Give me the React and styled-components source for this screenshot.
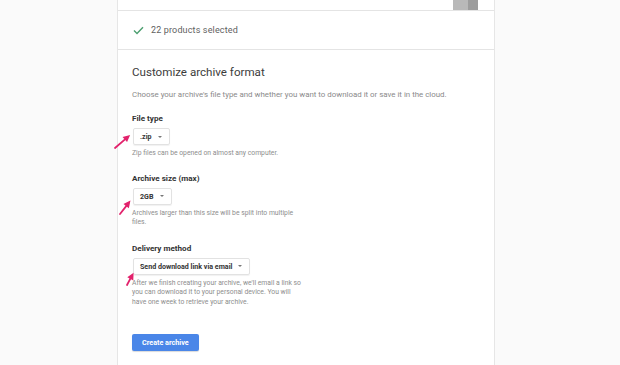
import React from 'react'
import styled, { createGlobalStyle } from 'styled-components'

const GlobalStyle = createGlobalStyle`
  html, body {
    margin: 0;
    padding: 0;
    background: #fafafa;
    font-family: Roboto, 'Liberation Sans', Arial, sans-serif;
  }
`

const Page = styled.div`
  width: 620px;
  height: 365px;
  overflow: hidden;
  padding-left: 117px;
  box-sizing: border-box;
`

const Card = styled.div`
  width: 378px;
  background: #fff;
  border-left: 1px solid #e6e6e6;
  border-right: 1px solid #e6e6e6;
  box-sizing: border-box;
`

const TopStrip = styled.div`
  height: 10px;
  border-bottom: 1px solid #e4e4e4;
  display: flex;
  justify-content: flex-end;
  padding-right: 16px;
`

const Thumb = styled.div`
  width: 25px;
  height: 10px;
  background: linear-gradient(to right, #b9b9b9 0 60%, #9d9d9d 60% 100%);
`

const SelectedRow = styled.div`
  height: 38px;
  display: flex;
  align-items: center;
  gap: 7px;
  padding-left: 15px;
  border-bottom: 1px solid #e4e4e4;
  font-size: 9px;
  color: #5f5f5f;
  letter-spacing: 0.15px;
`

const Section = styled.div`
  padding: 13px 14px 30px 14px;
`

const Heading = styled.h2`
  margin: 0;
  font-size: 11.6px;
  font-weight: 400;
  color: #3c3c3c;
  line-height: 18px;
`

const Intro = styled.p`
  margin: 8px 0 0;
  font-size: 7.9px;
  color: #8a8a8a;
  line-height: 12px;
`

const Field = styled.div`
  position: relative;
  margin-top: ${p => p.$gap}px;
`

const Label = styled.div`
  font-size: 8.1px;
  font-weight: 700;
  color: #333;
  line-height: 11px;
`

const Select = styled.div`
  margin-top: 4px;
  display: inline-flex;
  align-items: center;
  justify-content: space-between;
  width: ${p => p.$width}px;
  height: 17px;
  box-sizing: border-box;
  padding: 0 7px 0 6px;
  border: 1px solid #e2e2e2;
  border-radius: 2px;
  box-shadow: 0 1px 1px rgba(0, 0, 0, 0.06);
  font-size: 7.1px;
  font-weight: 700;
  color: #333;
  margin-left: 1px;
`

const Caret = styled.span`
  width: 0;
  height: 0;
  border-left: 2px solid transparent;
  border-right: 2px solid transparent;
  border-top: 2px solid #777;
`

const Hint = styled.p`
  margin: 4px 0 0;
  width: ${p => p.$width || 300}px;
  font-size: 6.8px;
  color: #8d8d8d;
  line-height: 9.6px;
`

const Pointer = styled.svg`
  position: absolute;
  left: ${p => p.$left}px;
  top: ${p => p.$top}px;
  overflow: visible;
`

const Button = styled.button`
  margin-top: 26px;
  height: 17px;
  padding: 0 10px;
  border: none;
  border-radius: 2px;
  background: #4a86e8;
  color: #fff;
  font-family: inherit;
  font-size: 7.2px;
  font-weight: 700;
  box-shadow: 0 1px 1px rgba(0, 0, 0, 0.15);
`

const Arrow = ({ left, top, len = 18, angle = 40 }) => (
  <Pointer $left={left} $top={top} width="16" height="16" viewBox="0 0 16 16">
    <g transform={`rotate(-${angle} 0 16)`}>
      <line x1="0" y1="16" x2={len - 6} y2="16" stroke="#e2226c" strokeWidth="1.8" strokeLinecap="round" />
      <polygon points={`${len},16 ${len - 7},12.6 ${len - 7},19.4`} fill="#e2226c" />
    </g>
  </Pointer>
)

const Check = () => (
  <svg width="11" height="9" viewBox="0 0 11 9">
    <path d="M1 4.6 L4 7.6 L10 1.2" fill="none" stroke="#4c9f70" strokeWidth="1.4" />
  </svg>
)

const App = () => (
  <Page>
    <GlobalStyle />
    <Card>
      <TopStrip>
        <Thumb />
      </TopStrip>
      <SelectedRow>
        <Check />
        22 products selected
      </SelectedRow>
      <Section>
        <Heading>Customize archive format</Heading>
        <Intro>
          Choose your archive's file type and whether you want to download it or save it in the cloud.
        </Intro>
        <Field $gap={12}>
          <Label>File type</Label>
          <Select $width={37}>
            .zip <Caret />
          </Select>
          <Hint>Zip files can be opened on almost any computer.</Hint>
          <Arrow left={-17} top={19} len={20} angle={41} />
        </Field>
        <Field $gap={14}>
          <Label>Archive size (max)</Label>
          <Select $width={39}>
            2GB <Caret />
          </Select>
          <Hint $width={168}>Archives larger than this size will be split into multiple files.</Hint>
          <Arrow left={-12} top={25} len={17} angle={52} />
        </Field>
        <Field $gap={15}>
          <Label>Delivery method</Label>
          <Select $width={117}>
            Send download link via email <Caret />
          </Select>
          <Hint $width={174}>
            After we finish creating your archive, we'll email a link so you can download it to your personal device. You will have one week to retrieve your archive.
          </Hint>
          <Arrow left={-5} top={26} len={14} angle={62} />
        </Field>
        <Button>Create archive</Button>
      </Section>
    </Card>
  </Page>
)

export default App
